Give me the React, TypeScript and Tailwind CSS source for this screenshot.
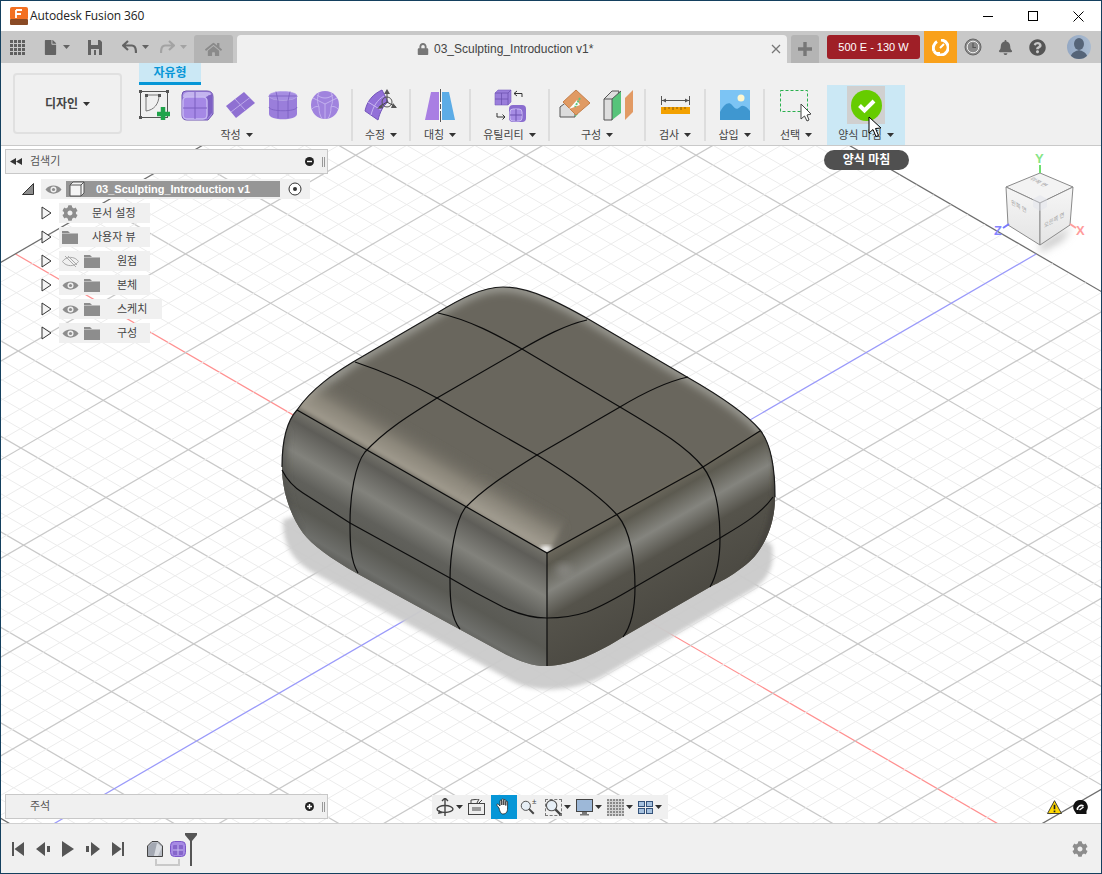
import React from "react";
import { FaBell, FaCog, FaFile, FaHome, FaLock, FaQuestionCircle } from "react-icons/fa";

const Caret = ({ className = "" }: { className?: string }) => (
  <svg width="7" height="4" viewBox="0 0 7 4" className={className}>
    <polygon points="0,0 7,0 3.5,4" fill="currentColor" />
  </svg>
);

const Label = ({ text }: { text: string }) => (
  <div className="h-[20px] flex items-center justify-center gap-[5px] text-[11px] leading-none text-[#444]">
    <span>{text}</span>
    <Caret className="text-[#333]" />
  </div>
);

const Sep = () => <div className="w-[2px] h-[52px] mt-[4px] bg-[#dddddd]" />;

const EDGE = "#6d52b0";

const CreateForm = () => (
  <svg width="33" height="33" viewBox="0 0 33 33">
    <rect x="1.5" y="2.5" width="27" height="26" fill="none" stroke="#555" strokeWidth="1" />
    <path d="M7 6 H20 M7 6 V22 M20 6 C20 15 15 21 7 22" fill="none" stroke="#777" strokeWidth="1" />
    {[[0, 1], [27, 1], [0, 27], [6, 5], [19, 5]].map(([x, y], i) => (
      <rect key={i} x={x} y={y} width="3" height="3" fill="#555" />
    ))}
    <path d="M24 18 V31 M18 25 H31" stroke="#1fa34a" strokeWidth="4.5" />
  </svg>
);

const BoxIcon = () => (
  <svg width="33" height="33" viewBox="0 0 33 33">
    <path d="M5 2 H26 Q32 2 32 8 V25 L27 31 H6 Q1 31 1 26 V6 Q1 2 5 2 Z" fill="#a68ce4" stroke={EDGE} />
    <path d="M2 8 Q2 4 7 3 H25 Q30 3 30 6 L25 8 H6 Z" fill="#c4b4ef" />
    <path d="M25 8 L31 5 V24 L26 30 Z" fill="#7e61c4" />
    <rect x="2" y="8" width="24" height="22" rx="4" fill="#a588e6" stroke="#c8baf2" strokeWidth="1.4" />
    <path d="M14 8 V30 M2 19 H26 M14 3 V8 M28 6 V27" stroke="#7a5ec0" strokeWidth="1" fill="none" />
  </svg>
);

const PlaneIcon = () => (
  <svg width="31" height="28" viewBox="0 0 31 28">
    <polygon points="19,1 30,12 11,27 1,15" fill="#8f70d2" />
    <path d="M10 8 L21 20 M25 6.5 L6 21" stroke="#bdaaea" strokeWidth="1" />
  </svg>
);

const CylinderIcon = () => (
  <svg width="30" height="30" viewBox="0 0 30 30">
    <path d="M1 6 C1 0 29 0 29 6 V24 C29 31 1 31 1 24 Z" fill="#9a7edb" />
    <path d="M1 6 C1 12 29 12 29 6" fill="#b09ae6" stroke="#7e61c4" />
    <path d="M1 6 C1 0 29 0 29 6 C29 12 1 12 1 6 Z" fill="#a68ee2" stroke="#c5b6ee" strokeWidth=".6" />
    <path d="M1 17 C1 22 29 22 29 17 M10 11 V28 M20 11 V28 M8 1.5 L10 11 M22 1.5 L20 11 M1 6 H29" stroke="#7a5ec0" fill="none" strokeWidth=".8" />
  </svg>
);

const SphereIcon = () => (
  <svg width="30" height="30" viewBox="0 0 30 30">
    <circle cx="15" cy="15" r="14" fill="#a083de" />
    <path d="M15 14 L3 8 M15 14 L27 8 M15 14 V29 M9 2.5 C7 8 7 12 9 17 C9 22 10 26 12 28.5 M21 2.5 C23 8 23 12 21 17 C21 22 20 26 18 28.5 M2 19 C6 15 9 17 9 17 M28 19 C24 15 21 17 21 17 M7 5 C12 9 18 9 23 5" stroke="#c6b6ef" fill="none" strokeWidth=".9" />
  </svg>
);

const ModifyIcon = () => (
  <svg width="34" height="33" viewBox="0 0 34 33">
    <path d="M1 22 C3 12 9 5 18 1 L24 13 C19 17 16 23 14 31 Z" fill="#9270d8" stroke="#7455bb" />
    <path d="M7 26 C9 18 13 11 20 7 M4 13 L17 21" stroke="#c7b6f0" fill="none" />
    <circle cx="23" cy="13" r="5" fill="none" stroke="#555" />
    <path d="M23 3 V13 L15 18 M23 13 L32 18" stroke="#444" fill="none" />
    <polygon points="23,0 20,5 26,5" fill="#555" />
    <polygon points="13,20 18,15 19,19" fill="#555" />
    <polygon points="33,19 27,19 29,14" fill="#555" />
  </svg>
);

const MirrorIcon = () => (
  <svg width="32" height="33" viewBox="0 0 32 33">
    <polygon points="7,3 15,3 15,31 1,31" fill="#a97fe3" />
    <polygon points="18,3 25,3 31,31 18,31" fill="#5cace6" />
    <path d="M16.5 0 V33" stroke="#fff" strokeWidth="2" />
    <path d="M16.5 0 V33" stroke="#555" strokeWidth="1" strokeDasharray="13 2 5 2" />
  </svg>
);

const UtilityIcon = () => (
  <svg width="32" height="33" viewBox="0 0 32 33">
    <polygon points="1,4 4,1 17,1 17,13 14,16 1,16" fill="#9a7edb" stroke="#7a5ec0" strokeWidth=".6" />
    <path d="M1 4 H14 V16 M14 4 L17 1 M7.5 4 V16 M1 10 H14" stroke="#6d52b0" fill="none" strokeWidth=".8" />
    <path d="M20 4.5 H28 V8 M20 4.5 L23 2 M20 4.5 L23 7" stroke="#333" fill="none" />
    <path d="M3 24 V28 H11 M11 28 L8.5 25.5 M11 28 L8.5 30.5" stroke="#333" fill="none" />
    <rect x="15" y="16" width="17" height="17" rx="4" fill="#8a6dcf" />
    <rect x="16" y="20" width="12" height="12" rx="3" fill="#a68ce4" stroke="#c9bbf2" />
    <path d="M22 20 V32 M16 26 H28" stroke="#6d52b0" />
  </svg>
);

const PlaneAngleIcon = () => (
  <svg width="33" height="33" viewBox="0 0 33 33">
    <path d="M1 28 V18 L9 12 H16 V28 Z" fill="#dcdcdc" stroke="#555" />
    <polygon points="16,28 16,20 19,25" fill="#5fc47e" />
    <polygon points="17,1 31,14 17,26 4,13" fill="#e09a63" stroke="#c47f4a" />
    <polygon points="18,11 21,16 10,20" fill="#fff" />
    <path d="M21 9 L16 18" stroke="#5fc47e" strokeWidth="2" strokeDasharray="2 1" />
  </svg>
);

const PlaneOffsetIcon = () => (
  <svg width="32" height="33" viewBox="0 0 32 33">
    <polygon points="1,10 9,2 16,2 9,31 1,31" fill="#dedede" stroke="#555" />
    <polygon points="9,10 18,2 18,24 9,31" fill="#57c47a" />
    <path d="M1 10 H9 V31 M9 10 L18 2" stroke="#555" fill="none" />
    <polygon points="22,9 30,1 30,23 22,31" fill="#e29a64" />
  </svg>
);

const RulerIcon = () => (
  <svg width="29" height="18" viewBox="0 0 29 18">
    <path d="M.5 0 V9 M28.5 0 V9 M1 4.5 H28" stroke="#555" />
    <polygon points="1,4.5 5,2.5 5,6.5" fill="#555" />
    <polygon points="28,4.5 24,2.5 24,6.5" fill="#555" />
    <rect x="0" y="11" width="29" height="7" fill="#f3a100" />
    <path d="M4 11 V14 M8 11 V13 M12 11 V14 M16 11 V13 M20 11 V14 M24 11 V13" stroke="#8a5b00" />
  </svg>
);

const PictureIcon = () => (
  <svg width="30" height="30" viewBox="0 0 30 30">
    <rect width="30" height="30" fill="#7cc4f4" />
    <circle cx="21" cy="8" r="3.5" fill="#fdf6d0" />
    <path d="M0 22 C4 14 9 11 12 15 C15 19 17 20 20 17 C23 14 27 17 30 21 V30 H0 Z" fill="#3f97d0" />
  </svg>
);

const SelectIcon = () => (
  <svg width="33" height="33" viewBox="0 0 33 33">
    <rect x=".5" y="1.5" width="27" height="21" fill="none" stroke="#2bb04f" strokeDasharray="3 2" />
    <polygon points="21,15 21,30 24.5,27 27,32 29,31 27,26 31,25" fill="#fff" stroke="#444" />
  </svg>
);

const Cursor = ({ className = "" }: { className?: string }) => (
  <svg width="15" height="22" viewBox="0 0 15 22" className={className}>
    <polygon points="1,1 1,17 5,13.5 8,20.5 10.5,19.5 7.5,12.5 13,12" fill="#fff" stroke="#000" />
  </svg>
);

const Eye = ({ off = false, color = "#8d8d8d" }: { off?: boolean; color?: string }) => (
  <svg width="17" height="11" viewBox="0 0 17 11">
    <path d="M.5 5.5 C4 0 13 0 16.5 5.5 C13 11 4 11 .5 5.5 Z" fill={off ? "none" : color} stroke={off ? "#aaa" : "none"} />
    {!off && <circle cx="8.5" cy="5.5" r="3" fill="#f0f0f0" />}
    {!off && <circle cx="8.5" cy="5.5" r="1.6" fill={color} />}
    {off && <path d="M3 0 L14 11 M6 0 L15 9" stroke="#aaa" />}
  </svg>
);

const Folder = () => (
  <svg width="16" height="13" viewBox="0 0 16 13">
    <path d="M0 0 H6 L8 2 H16 V13 H0 Z" fill="#8d8d8d" />
    <path d="M0 2.5 H16" stroke="#dcdcdc" strokeWidth=".6" />
  </svg>
);

const Expander = () => (
  <svg width="11" height="14" viewBox="0 0 11 14">
    <polygon points="1,1 10,7 1,13" fill="#f4f4f4" stroke="#333" />
  </svg>
);

const TreeRow = ({ label, gear, off, wide, eye = true }: { label: string; gear?: boolean; off?: boolean; wide?: boolean; eye?: boolean }) => (
  <div className="h-[24px] flex items-center pl-[36px]">
    <Expander />
    <div className={`ml-[7px] h-[20px] bg-[#f0f0f0] flex items-center text-[11px] text-[#444] ${wide ? "w-[103px]" : "w-[91px]"}`}>
      <div className="w-[22px] flex justify-center">
        {gear ? <FaCog className="text-[#8d8d8d] text-[16px]" /> : eye ? <Eye off={off} /> : <Folder />}
      </div>
      {eye && !gear && <div className="ml-[3px] w-[16px]"><Folder /></div>}
      <span className={eye && !gear ? "ml-[17px]" : "ml-[11px]"}>{label}</span>
    </div>
  </div>
);

const offset = (k: number) => (k < 0 ? 98.7 * k : 95.5 * k);

const Grid = () => {
  const steps: number[] = [];
  for (let i = -30; i <= 30; i++) steps.push(i / 5);
  const color = (k: number) => {
    if (Math.abs(k) === 6) return "#6e6e6e";
    return Number.isInteger(k) ? "#c9c9c9" : "#ececec";
  };
  const width = (k: number) => (Number.isInteger(k) ? 1.25 : 1);
  // minor lines first so the major ones sit on top
  const order = [...steps].sort((a, b) => Number(Number.isInteger(a)) - Number(Number.isInteger(b)));
  const m = 0.58;
  return (
    <g>
      {order.map((k) => {
        const c = 245 + offset(k);
        const x1 = (263 - c) / (2 * m);
        const x2 = (1428 - c) / (2 * m);
        return (
          <line key={`c${k}`} x1={x1} y1={c + m * x1} x2={x2} y2={c + m * x2} stroke={k === 0 ? "#ff9090" : color(k)} strokeWidth={width(k)} />
        );
      })}
      {order.map((k) => {
        const d = 855 + offset(k);
        const x1 = (d - 818) / (2 * m);
        const x2 = (d + 347) / (2 * m);
        return (
          <line key={`d${k}`} x1={x1} y1={d - m * x1} x2={x2} y2={d - m * x2} stroke={k === 0 ? "#9a9afa" : color(k)} strokeWidth={width(k)} />
        );
      })}
    </g>
  );
};

const SILHOUETTE =
  "M282 467 C282 445 286 422 297 410 C312 388 335 373 353 362 L437 313 C460 299 482 287 503 287 C530 287 560 303 590 320 L687 377 C715 393 745 412 760 430 C772 445 775 470 775 497 C775 530 760 555 743 567 C730 577 720 582 710 587 L623 637 C600 652 570 666 547 666 C530 666 518 660 505 654 L358 574 C330 558 312 545 303 533 C290 515 282 490 282 467 Z";

const Model = () => (
  <g>
    <defs>
      <clipPath id="body">
        <path d={SILHOUETTE} />
      </clipPath>
      <filter id="b2" x="-30%" y="-30%" width="160%" height="160%"><feGaussianBlur stdDeviation="2" /></filter>
      <filter id="b4" x="-30%" y="-30%" width="160%" height="160%"><feGaussianBlur stdDeviation="4" /></filter>
      <linearGradient id="frontGlow" gradientUnits="userSpaceOnUse" x1="422" y1="481" x2="444" y2="443">
        <stop offset="0" stopColor="#a8a295" stopOpacity=".95" />
        <stop offset="0.45" stopColor="#a09a8c" stopOpacity=".6" />
        <stop offset="1" stopColor="#69665d" stopOpacity="0" />
      </linearGradient>
      <linearGradient id="cornerGlow" gradientUnits="userSpaceOnUse" x1="510" y1="532" x2="528" y2="500">
        <stop offset="0" stopColor="#aaa599" stopOpacity=".7" />
        <stop offset="1" stopColor="#69665d" stopOpacity="0" />
      </linearGradient>
      <linearGradient id="leftSide" gradientUnits="userSpaceOnUse" x1="422" y1="481" x2="364" y2="582">
        <stop offset="0" stopColor="#74736b" />
        <stop offset="0.1" stopColor="#5e5d58" />
        <stop offset="0.33" stopColor="#82827c" />
        <stop offset="0.52" stopColor="#60605b" />
        <stop offset="0.72" stopColor="#5a5a54" />
        <stop offset="0.9" stopColor="#6e6f6b" />
        <stop offset="1" stopColor="#5a5a56" />
      </linearGradient>
      <linearGradient id="rightSide" gradientUnits="userSpaceOnUse" x1="653" y1="491" x2="711" y2="592">
        <stop offset="0" stopColor="#6e6a5e" />
        <stop offset="0.1" stopColor="#5c5a50" />
        <stop offset="0.3" stopColor="#84847e" />
        <stop offset="0.5" stopColor="#55534b" />
        <stop offset="1" stopColor="#4b4942" />
      </linearGradient>
    </defs>
    <path
      d="M283 520 C283 545 292 560 312 572 L510 680 C530 692 565 694 600 678 L752 590 C770 578 775 565 772 545 L700 500 L400 480 Z"
      fill="#cbcbcb"
      opacity=".96"
      filter="url(#b2)"
    />
    <path d={SILHOUETTE} fill="#69665d" />
    <g clipPath="url(#body)">
      {/* back rim */}
      <path d="M300 400 L353 362 L437 313 C460 299 482 287 503 287 C530 287 560 303 590 320 L687 377 C715 393 745 412 765 434" fill="none" stroke="#a5a59e" strokeWidth="8" filter="url(#b4)" />
      {/* top highlight along the front edge */}
      <polygon points="297,407 547,553 572,510 322,364" fill="url(#frontGlow)" filter="url(#b2)" />
      <polygon points="465,506 550,555 570,520 485,472" fill="url(#cornerGlow)" filter="url(#b4)" />
      <ellipse cx="546" cy="549" rx="6" ry="3" fill="#fff" filter="url(#b2)" />
      {/* side faces go over the highlights so the crease stays sharp */}
      <polygon points="270,394 547,553 547,680 270,560" fill="url(#leftSide)" />
      <polygon points="547,553 790,413 790,620 547,680" fill="url(#rightSide)" />
      <ellipse cx="564" cy="570" rx="8" ry="6" fill="#8f8e8a" filter="url(#b4)" opacity=".8" />
      <path d="M284 430 C278 470 282 510 300 535" fill="none" stroke="#4f4f4b" strokeWidth="6" filter="url(#b4)" />
      <path d="M772 440 C780 480 778 530 745 570" fill="none" stroke="#44433d" strokeWidth="5" filter="url(#b2)" />
    </g>
    <path d="M282 467 C282 445 286 422 297 410 C312 388 335 373 353 362 L437 313 C460 299 482 287 503 287 C530 287 560 303 590 320 L687 377 C715 393 745 412 760 430 C772 445 775 470 775 497" fill="none" stroke="#1a1a1a" strokeWidth="1.2" />
    <g fill="none" stroke="#0c0c0c" strokeWidth="1.2">
      <path d="M297 410 L547 553 L703 467 L760 431" />
      <path d="M355 362 C385 372 410 383 437 398 L537 455 C570 475 600 495 618 516 C630 530 635 560 635 587 C635 605 632 625 623 637" />
      <path d="M438 313 C470 320 497 335 522 349 L620 407 C655 428 685 445 703 467 C715 482 720 510 720 538 C720 555 717 575 710 587" />
      <path d="M587 320 C565 325 543 337 522 349 L437 398 C410 415 385 430 365 452 C355 465 350 495 350 523 C350 540 350 560 358 573" />
      <path d="M688 377 C665 382 640 395 620 407 L537 455 C510 472 485 487 465 508 C455 522 450 555 450 580 C450 600 451 618 460 629" />
      <path d="M547 553 V666" />
      <path d="M282 470 C288 482 295 488 303 493 L350 523 L450 578 C470 590 485 598 503 607 C518 614 532 618 547 618 C562 618 575 616 587 612 C605 605 620 596 635 587 L720 538 C740 526 760 515 773 497" />
    </g>
  </g>
);

const ViewCube = () => (
  <g>
    <defs>
      <linearGradient id="cubeFace" x1="0" y1="0" x2="0" y2="1">
        <stop offset="0" stopColor="#f6f6f6" />
        <stop offset="1" stopColor="#e4e4e4" />
      </linearGradient>
      <filter id="cubeShadow" x="-40%" y="-40%" width="180%" height="180%"><feGaussianBlur stdDeviation="4" /></filter>
    </defs>
    <polygon points="1040,245 1072,226 1062,240 1040,252" fill="#bbb" filter="url(#cubeShadow)" />
    <polygon points="1040,173 1073,187 1040,203 1006,187" fill="#f3f3f3" stroke="#8a8a8a" />
    <polygon points="1006,187 1040,203 1040,245 1008,225" fill="url(#cubeFace)" stroke="#8a8a8a" />
    <polygon points="1073,187 1040,203 1040,245 1070,225" fill="url(#cubeFace)" stroke="#8a8a8a" />
    <polygon points="1040,195 1047,199 1047,207 1040,211 1033,207 1033,199" fill="#dfe3ea" opacity=".45" />
    <g fontSize="6" fill="#a2a2a2" fontFamily="'Noto Sans CJK KR', sans-serif">
      <text transform="matrix(.87 .45 -.87 .45 1029 179)">위쪽 면</text>
      <text transform="matrix(.87 .5 0 1 1011 204)">왼쪽 면</text>
      <text transform="matrix(.87 -.5 0 1 1044 228)">오른쪽 면</text>
    </g>
    <path d="M1040 165 V173" stroke="#6fe06f" strokeWidth="2" />
    <path d="M1003 228 L1009 224" stroke="#7878ff" strokeWidth="2" />
    <path d="M1070 224 L1076 228" stroke="#ff9c9c" strokeWidth="2" />
    <g fontSize="13" fontWeight="700" fontFamily="'Liberation Sans', sans-serif">
      <text x="1035" y="163" fill="#86e586">Y</text>
      <text x="994" y="235" fill="#8585ff">Z</text>
      <text x="1076" y="235" fill="#ff9c9c">X</text>
    </g>
  </g>
);

const NavCaret = () => <Caret className="text-[#333] ml-[2px]" />;

const Magnifier = ({ size = 18 }: { size?: number }) => (
  <svg width={size} height={size} viewBox="0 0 18 18">
    <circle cx="7" cy="7" r="5.5" fill="#e6eef5" stroke="#555" strokeWidth="1.2" />
    <path d="M11 11 L16.5 16.5" stroke="#444" strokeWidth="2.4" />
  </svg>
);

export default function App() {
  return (
    <div className="w-[1102px] h-[874px] flex flex-col overflow-hidden border border-[#14405f] bg-white font-['Liberation_Sans','Noto_Sans_CJK_KR',sans-serif]">
      {/* title bar */}
      <div className="h-[30px] flex items-center bg-white">
        <svg width="18" height="18" viewBox="0 0 18 18" className="ml-[9px]">
          <rect x="0" y="0" width="18" height="13" rx="2" fill="#f37021" />
          <rect x="0" y="12" width="18" height="6" rx="1" fill="#8a4a25" />
          <path d="M6 3 H12 M6 3 V11 M6 7 H11" stroke="#fff" strokeWidth="1.8" fill="none" />
        </svg>
        <span className="ml-[2px] text-[12px] tracking-[-0.1px] text-[#222] font-['Open_Sans','Liberation_Sans',sans-serif]">Autodesk Fusion 360</span>
        <div className="ml-auto flex items-center">
          <div className="w-[45px] flex justify-center"><div className="w-[10px] h-[1px] bg-black" /></div>
          <div className="w-[45px] flex justify-center"><div className="w-[10px] h-[10px] border border-black" /></div>
          <div className="w-[46px] flex justify-center">
            <svg width="11" height="11" viewBox="0 0 11 11"><path d="M.5 .5 L10.5 10.5 M10.5 .5 L.5 10.5" stroke="#000" /></svg>
          </div>
        </div>
      </div>

      {/* tab bar */}
      <div className="h-[32px] flex items-center bg-[#c8c8c8] text-[#5f5f5f]">
        <div className="ml-[9px] grid grid-cols-4 gap-[1px] w-[15px]">
          {Array.from({ length: 16 }).map((_, i) => (
            <div key={i} className="w-[3px] h-[3px] bg-[#5f5f5f]" />
          ))}
        </div>
        <FaFile className="ml-[18px] text-[15px] text-[#636363]" />
        <Caret className="ml-[5px] text-[#636363]" />
        <svg width="14" height="15" viewBox="0 0 14 15" className="ml-[18px]">
          <path d="M0 0 H12 L14 2 V15 H0 Z" fill="#636363" />
          <rect x="3" y="0" width="7" height="5" fill="#c8c8c8" />
          <rect x="3" y="9" width="8" height="6" fill="#c8c8c8" />
          <rect x="6" y="10" width="2" height="5" fill="#636363" />
        </svg>
        <svg width="15" height="14" viewBox="0 0 15 14" className="ml-[20px]">
          <path d="M6 1 L1 5.5 L6 10 M1.5 5.5 H10 C13 5.5 14 8 14 13" fill="none" stroke="#636363" strokeWidth="2.2" />
        </svg>
        <Caret className="ml-[5px] text-[#636363]" />
        <svg width="15" height="14" viewBox="0 0 15 14" className="ml-[11px]">
          <path d="M9 1 L14 5.5 L9 10 M13.5 5.5 H5 C2 5.5 1 8 1 13" fill="none" stroke="#a3a3a3" strokeWidth="2.2" />
        </svg>
        <Caret className="ml-[5px] text-[#a3a3a3]" />
        <div className="ml-[7px] mt-[4px] w-[39px] h-[28px] rounded-t-[3px] bg-[#b4b4b4] flex items-center justify-center">
          <FaHome className="text-[17px] text-[#8a8a8a]" />
        </div>
        <div className="ml-[4px] mt-[4px] w-[550px] h-[28px] rounded-t-[4px] bg-[#f0f0f0] flex items-center relative text-[#444]">
          <FaLock className="ml-[180px] text-[12px] text-[#777]" />
          <span className="ml-[5px] text-[12px] text-[#444]">03_Sculpting_Introduction v1*</span>
          <svg width="10" height="10" viewBox="0 0 10 10" className="ml-auto mr-[6px]"><path d="M1 1 L9 9 M9 1 L1 9" stroke="#777" strokeWidth="1.3" /></svg>
        </div>
        <div className="ml-[4px] mt-[4px] w-[28px] h-[28px] rounded-t-[3px] bg-[#b4b4b4] flex items-center justify-center">
          <svg width="14" height="14" viewBox="0 0 14 14"><path d="M7 0 V14 M0 7 H14" stroke="#777" strokeWidth="3.4" /></svg>
        </div>
        <div className="ml-[8px] w-[93px] h-[24px] rounded-[3px] bg-[#9f1f27] text-white text-[11px] flex items-center justify-center">500 E - 130 W</div>
        <div className="ml-[4px] w-[33px] h-full bg-[#f9a11b] flex items-center justify-center">
          <svg width="17" height="17" viewBox="0 0 17 17">
            <path d="M9 1 A7.5 7.5 0 1 1 2 12" fill="none" stroke="#fff" strokeWidth="3" />
            <path d="M2 12 A7.5 7.5 0 0 1 5 2.5" fill="none" stroke="#fff" strokeWidth="3" />
            <path d="M8 9 L12 5 M4 14 L8 14" stroke="#fff" strokeWidth="2" />
          </svg>
        </div>
        <svg width="18" height="18" viewBox="0 0 18 18" className="ml-[7px]">
          <circle cx="9" cy="9" r="8" fill="#8b8b8b" stroke="#666" />
          <circle cx="9" cy="9" r="5.8" fill="none" stroke="#eee" />
          <path d="M9 5 V9.5 H12" fill="none" stroke="#555" strokeWidth="1.2" />
        </svg>
        <FaBell className="ml-[16px] text-[15px] text-[#636363]" />
        <FaQuestionCircle className="ml-[16px] text-[17px] text-[#555]" />
        <svg width="24" height="24" viewBox="0 0 24 24" className="ml-[21px]">
          <defs>
            <linearGradient id="avatar" x1="0" y1="0" x2="1" y2="0">
              <stop offset="0" stopColor="#94a8c4" />
              <stop offset="1" stopColor="#a9bbd0" />
            </linearGradient>
            <clipPath id="avatarClip"><circle cx="12" cy="12" r="12" /></clipPath>
          </defs>
          <circle cx="12" cy="12" r="12" fill="url(#avatar)" />
          <g clipPath="url(#avatarClip)">
            <ellipse cx="12" cy="9" rx="5" ry="6" fill="#556478" />
            <path d="M3 24 C4 17 9 16 12 15 C15 16 20 17 21 24 Z" fill="#556478" />
          </g>
        </svg>
      </div>

      {/* toolbar */}
      <div className="h-[83px] flex bg-[#f0f0f0] border-b border-[#c9c9c9]">
        <div className="w-[121px] pl-[12px] pt-[10px]">
          <div className="w-[109px] h-[61px] rounded-[4px] border-2 border-[#e0e0e0] flex items-center justify-center gap-[5px] text-[12px] font-bold text-[#444]">
            <span>디자인</span>
            <Caret className="text-[#333]" />
          </div>
        </div>
        <div className="flex-1 flex flex-col">
          <div className="h-[22px] pl-[17px]">
            <div className="w-[62px] h-[22px] bg-[#cbe8f5] border-b-[3px] border-[#0696d7] flex items-center justify-center text-[12px] font-bold text-[#0696d7]">자유형</div>
          </div>
          <div className="flex h-[60px]">
            <div className="w-[229px]">
              <div className="h-[40px] flex items-center pl-[17px]">
                <CreateForm />
                <div className="ml-[9px]"><BoxIcon /></div>
                <div className="ml-[11px]"><PlaneIcon /></div>
                <div className="ml-[12px]"><CylinderIcon /></div>
                <div className="ml-[12px]"><SphereIcon /></div>
              </div>
              <Label text="작성" />
            </div>
            <Sep />
            <div className="w-[56px]">
              <div className="h-[40px] flex items-center justify-center"><ModifyIcon /></div>
              <Label text="수정" />
            </div>
            <Sep />
            <div className="w-[58px]">
              <div className="h-[40px] flex items-center justify-center"><MirrorIcon /></div>
              <Label text="대칭" />
            </div>
            <Sep />
            <div className="w-[77px]">
              <div className="h-[40px] flex items-center justify-center"><UtilityIcon /></div>
              <Label text="유틸리티" />
            </div>
            <Sep />
            <div className="w-[94px]">
              <div className="h-[40px] flex items-center justify-center gap-[11px]">
                <PlaneAngleIcon />
                <PlaneOffsetIcon />
              </div>
              <Label text="구성" />
            </div>
            <Sep />
            <div className="w-[58px]">
              <div className="h-[40px] flex items-center justify-center"><RulerIcon /></div>
              <Label text="검사" />
            </div>
            <Sep />
            <div className="w-[57px]">
              <div className="h-[40px] flex items-center justify-center"><PictureIcon /></div>
              <Label text="삽입" />
            </div>
            <Sep />
            <div className="w-[62px]">
              <div className="h-[40px] flex items-center justify-center"><SelectIcon /></div>
              <Label text="선택" />
            </div>
            <div className="w-[78px] bg-[#cbe8f5] relative">
              <div className="h-[40px] flex items-center justify-center">
                <div className="w-[38px] h-[38px] bg-[#d0d0d0] flex items-center justify-center">
                  <svg width="31" height="31" viewBox="0 0 31 31">
                    <circle cx="15.5" cy="15.5" r="15.5" fill="#66cc00" />
                    <path d="M8.5 15.5 L13.5 20.5 L23 11" fill="none" stroke="#fff" strokeWidth="4" />
                  </svg>
                </div>
              </div>
              <Label text="양식 마침" />
              <Cursor className="absolute left-[41px] top-[31px]" />
            </div>
          </div>
        </div>
      </div>

      {/* viewport */}
      <div className="relative h-[677px] overflow-hidden bg-white">
        <svg width="1100" height="677" viewBox="1 146 1100 677" className="block">
          <Grid />
          <Model />
          <ViewCube />
        </svg>

        {/* tooltip */}
        <div className="absolute left-[823px] top-[4px] w-[85px] h-[20px] rounded-full bg-[#505050] text-white text-[12px] font-bold flex items-center justify-center">양식 마침</div>

        {/* browser panel */}
        <div className="absolute left-[4px] top-[3px] w-[323px]">
          <div className="h-[25px] bg-[#f0f0f0] border border-[#c8c8c8] flex items-center text-[11px] text-[#555]">
            <svg width="12" height="7" viewBox="0 0 12 7" className="ml-[4px]">
              <polygon points="6,0 6,7 0,3.5" fill="#333" />
              <polygon points="12,0 12,7 6,3.5" fill="#333" />
            </svg>
            <span className="ml-[8px]">검색기</span>
            <svg width="9" height="9" viewBox="0 0 9 9" className="ml-auto">
              <circle cx="4.5" cy="4.5" r="4.5" fill="#222" />
              <path d="M2 4.5 H7" stroke="#fff" strokeWidth="1.4" />
            </svg>
            <div className="ml-[8px] mr-[2px] w-[3px] h-[10px] border-x border-[#999]" />
          </div>
          <div className="mt-[3px] h-[24px] flex items-center pl-[17px]">
            <svg width="12" height="12" viewBox="0 0 12 12">
              <polygon points="11.5,.5 11.5,11.5 .5,11.5" fill="#8d8d8d" stroke="#333" />
            </svg>
            <div className="ml-[7px] w-[269px] h-[20px] bg-[#f0f0f0] flex items-center">
              <div className="w-[25px] flex justify-center"><Eye /></div>
              <div className="w-[214px] h-[16px] bg-[#969696] flex items-center relative">
                <svg width="16" height="16" viewBox="0 0 16 16" className="ml-[3px]">
                  <path d="M1 4 L4 1 H15 V12 L12 15 H1 Z" fill="#f4f4f4" stroke="#555" />
                  <path d="M1 4 H12 V15 M12 4 L15 1" fill="none" stroke="#555" />
                </svg>
                <span className="absolute inset-x-0 text-center text-[11px] font-bold text-white">03_Sculpting_Introduction v1</span>
              </div>
              <svg width="14" height="14" viewBox="0 0 14 14" className="ml-[8px]">
                <circle cx="7" cy="7" r="6" fill="#fff" stroke="#333" />
                <circle cx="7" cy="7" r="2" fill="#333" />
              </svg>
            </div>
          </div>
          <TreeRow label="문서 설정" gear />
          <TreeRow label="사용자 뷰" eye={false} />
          <TreeRow label="원점" off />
          <TreeRow label="본체" />
          <TreeRow label="스케치" wide />
          <TreeRow label="구성" />
        </div>

        {/* comments panel */}
        <div className="absolute left-[4px] bottom-[4px] w-[323px] h-[25px] bg-[#f0f0f0] border border-[#c8c8c8] flex items-center text-[11px] text-[#555]">
          <span className="ml-[24px]">주석</span>
          <svg width="9" height="9" viewBox="0 0 9 9" className="ml-auto">
            <circle cx="4.5" cy="4.5" r="4.5" fill="#222" />
            <path d="M2 4.5 H7 M4.5 2 V7" stroke="#fff" strokeWidth="1.4" />
          </svg>
          <div className="ml-[8px] mr-[2px] w-[3px] h-[10px] border-x border-[#999]" />
        </div>

        {/* navigation bar */}
        <div className="absolute left-[431px] bottom-[4px] w-[236px] h-[24px] bg-[#f0f0f0] flex items-center">
          <svg width="18" height="18" viewBox="0 0 18 18" className="ml-[4px]">
            <path d="M9 0 V18 M6 3 L9 0 L12 3" fill="none" stroke="#444" strokeWidth="1.4" />
            <ellipse cx="9" cy="11" rx="8" ry="3.5" fill="none" stroke="#444" strokeWidth="1.4" />
            <polygon points="3,12 7,15 2,16" fill="#444" />
          </svg>
          <NavCaret />
          <svg width="17" height="16" viewBox="0 0 17 16" className="ml-[5px]">
            <rect x=".5" y="4.5" width="16" height="11" fill="#eee" stroke="#444" />
            <rect x="4" y="8" width="9" height="4" fill="#999" />
            <path d="M3 4 L3 1 L11 0 L9 4 M14 1 L11 4" fill="none" stroke="#444" />
          </svg>
          <div className="ml-[6px] w-[26px] h-[24px] bg-[#0696d7] flex items-center justify-center">
            <svg width="18" height="18" viewBox="0 0 18 18">
              <path d="M4 10 L2 7.5 C1 6 3 5.5 4 7 L5 8 V3 C5 1.8 6.8 1.8 6.8 3 V7 V1.8 C6.8 .5 8.8 .5 8.8 1.8 V7 V2.5 C8.8 1.2 10.8 1.2 10.8 2.5 V7.5 V4 C10.8 2.8 12.6 2.8 12.6 4 V10 C12.6 14 11 16 8 16 C6 16 5 14 4 10 Z" fill="#fff" stroke="#222" strokeWidth=".8" />
            </svg>
          </div>
          <div className="ml-[3px] relative w-[18px]">
            <Magnifier size={15} />
            <span className="absolute left-[12px] -top-[3px] text-[8px] leading-[9px] text-[#444]">±</span>
          </div>
          <div className="ml-[7px] relative w-[17px] h-[17px] border border-dashed border-[#777]">
            <div className="absolute -left-[1px] -top-[1px]"><Magnifier size={17} /></div>
          </div>
          <NavCaret />
          <svg width="17" height="17" viewBox="0 0 17 17" className="ml-[5px]">
            <rect x=".5" y=".5" width="16" height="12" fill="#9db8d8" stroke="#444" />
            <path d="M6 13 H11 V15 H13 V16.5 H4 V15 H6 Z" fill="#777" />
          </svg>
          <NavCaret />
          <svg width="17" height="17" viewBox="0 0 17 17" className="ml-[5px]">
            <rect width="17" height="17" fill="#8a8a8a" />
            <path d="M2.5 0 V17 M5.5 0 V17 M8.5 0 V17 M11.5 0 V17 M14.5 0 V17 M0 2.5 H17 M0 5.5 H17 M0 8.5 H17 M0 11.5 H17 M0 14.5 H17" stroke="#d4d4d4" />
          </svg>
          <NavCaret />
          <svg width="15" height="13" viewBox="0 0 15 13" className="ml-[5px]">
            <rect x=".5" y=".5" width="6" height="5" fill="#a8c3e0" stroke="#34527a" />
            <rect x="8.5" y=".5" width="6" height="5" fill="#a8c3e0" stroke="#34527a" />
            <rect x=".5" y="7.5" width="6" height="5" fill="#a8c3e0" stroke="#34527a" />
            <rect x="8.5" y="7.5" width="6" height="5" fill="#a8c3e0" stroke="#34527a" />
          </svg>
          <NavCaret />
        </div>

        {/* status icons */}
        <div className="absolute right-[13px] bottom-[9px] flex items-center gap-[11px]">
          <svg width="15" height="14" viewBox="0 0 16 15">
            <polygon points="8,.7 15.5,14.5 .5,14.5" fill="#ffd800" stroke="#333" />
            <path d="M8 5 V10 M8 11.2 V13" stroke="#222" strokeWidth="1.8" />
          </svg>
          <svg width="15" height="14" viewBox="0 0 14 14">
            <path d="M7 0 A7 7 0 0 1 13 11 V14 H3 L1 11 A7 7 0 0 1 7 0 Z" fill="#111" />
            <path d="M4 10 A4 4 0 0 1 10 6" fill="none" stroke="#fff" strokeWidth="1.6" />
            <path d="M6 10 L10 7" stroke="#fff" strokeWidth="1.4" />
          </svg>
        </div>
      </div>

      {/* timeline */}
      <div className="h-[50px] bg-[#f0f0f0] border-t border-[#d0d0d0] flex items-center relative">
        <svg width="12" height="14" viewBox="0 0 12 14" className="ml-[11px]"><path d="M0 0 H2 V14 H0 Z M12 0 V14 L2.5 7 Z" fill="#555" /></svg>
        <svg width="14" height="14" viewBox="0 0 14 14" className="ml-[12px]"><path d="M9 0 V14 L0 7 Z M11 4 H14 V10 H11 Z" fill="#555" /></svg>
        <svg width="12" height="16" viewBox="0 0 12 16" className="ml-[12px]"><path d="M0 0 L12 8 L0 16 Z" fill="#555" /></svg>
        <svg width="14" height="14" viewBox="0 0 14 14" className="ml-[12px]"><path d="M5 0 V14 L14 7 Z M0 4 H3 V10 H0 Z" fill="#555" /></svg>
        <svg width="12" height="14" viewBox="0 0 12 14" className="ml-[12px]"><path d="M10 0 H12 V14 H10 Z M0 0 V14 L9.5 7 Z" fill="#555" /></svg>
        <svg width="16" height="16" viewBox="0 0 16 16" className="ml-[23px]">
          <path d="M.5 5 L5 .5 H11 L15.5 5 V15.5 H.5 Z" fill="#b8bcc4" stroke="#444" />
          <path d="M1 6 L5 2 H11 V6 L7 15 H1 Z" fill="#a3a8b2" />
          <path d="M10 2 L15 6 L11 15 H7" fill="#d8dbe0" />
        </svg>
        <svg width="16" height="16" viewBox="0 0 16 16" className="ml-[7px]">
          <rect x=".5" y=".5" width="15" height="15" rx="4" fill="#a78be4" stroke="#7c58c8" />
          <rect x="3" y="4" width="10" height="10" rx="1" fill="#6f4fba" opacity=".6" />
          <path d="M8 4 V14 M3 9 H13" stroke="#c9bbf2" />
        </svg>
        <div className="absolute left-[154px] top-[35px] w-[25px] h-[7px] border-x-2 border-b-2 border-[#c9c9c9]" />
        <svg width="12" height="33" viewBox="0 0 12 33" className="absolute left-[184px] top-[9px]">
          <path d="M0 0 H12 V2 L7 8 V33 H5 V8 L0 2 Z" fill="#555" />
        </svg>
        <FaCog className="ml-auto mr-[13px] text-[#8d8d8d] text-[16px]" />
      </div>
    </div>
  );
}
